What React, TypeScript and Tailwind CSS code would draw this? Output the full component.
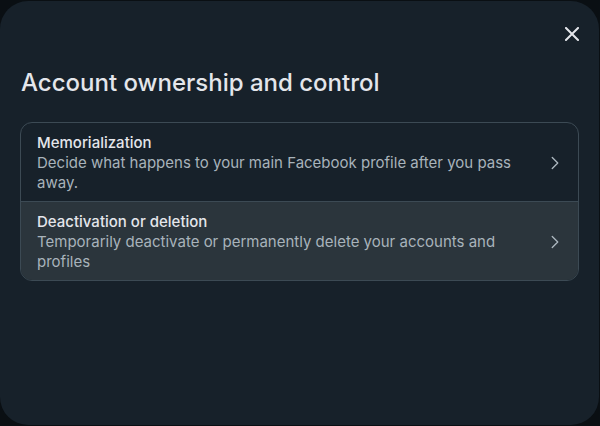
import { ChevronRight } from "lucide-react";

type Item = {
  title: string;
  description: string;
  highlighted?: boolean;
};

const ITEMS: Item[] = [
  {
    title: "Memorialization",
    description: "Decide what happens to your main Facebook profile after you pass away.",
  },
  {
    title: "Deactivation or deletion",
    description: "Temporarily deactivate or permanently delete your accounts and profiles",
    highlighted: true,
  },
];

export default function App() {
  return (
    <div className="h-[426px] w-[600px] overflow-hidden bg-[#0a0f13] pt-px font-['Inter','Noto_Sans',sans-serif]">
      <div className="flex h-[424px] w-[599px] flex-col rounded-[28px] bg-[#17212a] px-5">
        <div className="flex justify-end pt-[26px]">
          <button type="button" aria-label="Close" className="text-[#e4e6eb]">
            <svg width="14" height="14" viewBox="0 0 14 14" fill="none" stroke="currentColor" strokeWidth="2" strokeLinecap="square">
              <path d="M1 1l12 12M13 1L1 13" />
            </svg>
          </button>
        </div>

        <h1 className="mt-[28px] pl-px text-[24px] leading-[28px] font-medium text-[#e4e6eb]">
          Account ownership and control
        </h1>

        <div className="mt-[25px] overflow-hidden rounded-[12px] border border-[#3c4a54]">
          {ITEMS.map((item, index) => (
            <button
              key={item.title}
              type="button"
              className={
                "flex w-full items-center gap-4 pt-[10px] pb-[8px] pr-[12px] pl-4 text-left " +
                (index > 0 ? "border-t border-[#3c4a54] " : "") +
                (item.highlighted ? "bg-[#2b353c]" : "bg-transparent")
              }
            >
              <div className="min-w-0 flex-1">
                <div className="text-[15px] leading-[20px] font-medium text-[#e4e6eb]">{item.title}</div>
                <div className="text-[15px] leading-[20px] text-[#a8b3bb]">{item.description}</div>
              </div>
              <ChevronRight size={22} strokeWidth={1.5} className="shrink-0 text-[#a8b3bb]" />
            </button>
          ))}
        </div>
      </div>
    </div>
  );
}
